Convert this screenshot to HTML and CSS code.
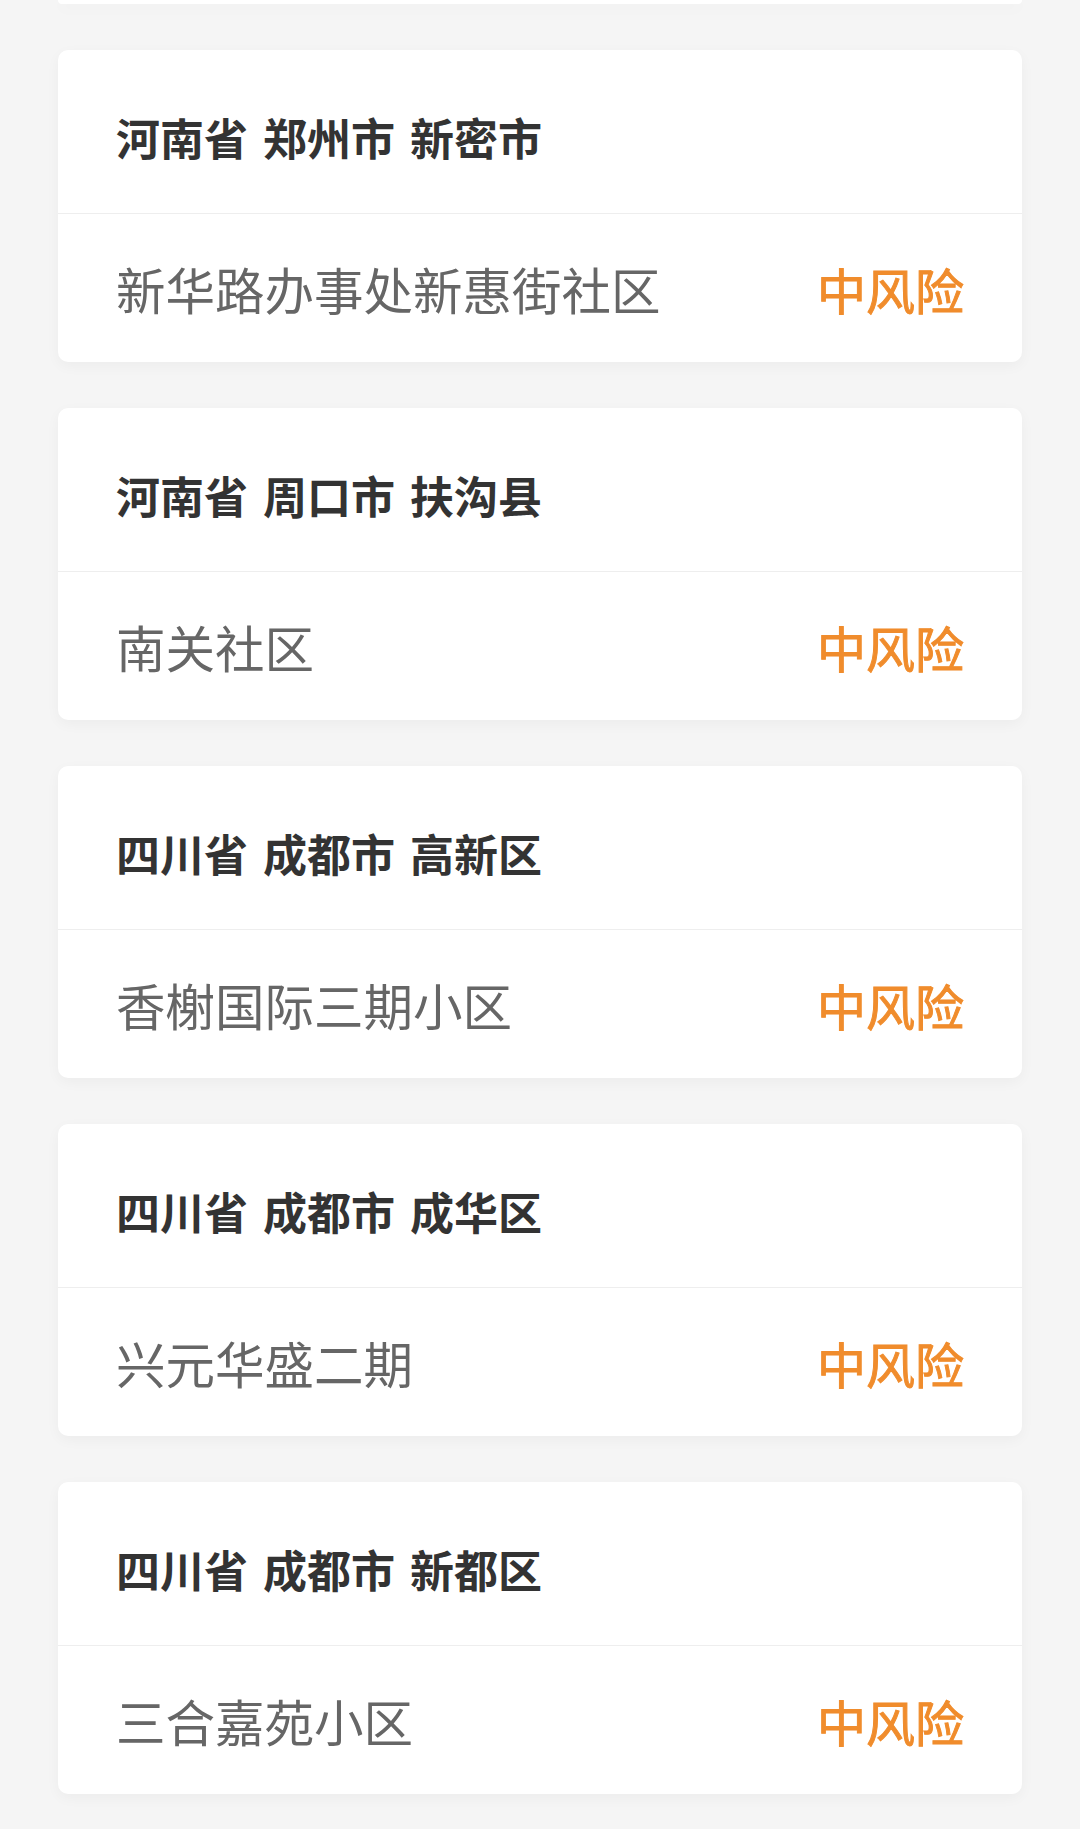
FILE: index.html
```html
<!DOCTYPE html>
<html lang="zh-CN">
<head>
    <meta charset="UTF-8">
    <meta name="viewport" content="width=device-width, initial-scale=1.0">
    <title>中风险地区</title>
    <link rel="stylesheet" href="styles.css">
</head>
<body>
    <div class="list">
        <!-- 上一张卡片只露出底边 -->
        <div class="card card-tail"></div>

        <div class="card">
            <div class="card-head">河南省 郑州市 新密市</div>
            <div class="card-row">
                <span class="place">新华路办事处新惠街社区</span>
                <span class="risk">中风险</span>
            </div>
        </div>

        <div class="card">
            <div class="card-head">河南省 周口市 扶沟县</div>
            <div class="card-row">
                <span class="place">南关社区</span>
                <span class="risk">中风险</span>
            </div>
        </div>

        <div class="card">
            <div class="card-head">四川省 成都市 高新区</div>
            <div class="card-row">
                <span class="place">香榭国际三期小区</span>
                <span class="risk">中风险</span>
            </div>
        </div>

        <div class="card">
            <div class="card-head">四川省 成都市 成华区</div>
            <div class="card-row">
                <span class="place">兴元华盛二期</span>
                <span class="risk">中风险</span>
            </div>
        </div>

        <div class="card">
            <div class="card-head">四川省 成都市 新都区</div>
            <div class="card-row">
                <span class="place">三合嘉苑小区</span>
                <span class="risk">中风险</span>
            </div>
        </div>
    </div>
</body>
</html>
```

FILE: styles.css
```css
body {
    margin: 0;
    background-color: #f5f5f5;
    font-family: "Noto Sans CJK SC", "Noto Sans", sans-serif;
    overflow: hidden;
}
.list {
    padding: 0 58px;
}
.card {
    background: #fff;
    border-radius: 10px;
    margin-bottom: 46px;
    box-shadow: 0 4px 14px rgba(0, 0, 0, 0.04);
    overflow: hidden;
}
.card-tail {
    height: 4px;
    border-radius: 0 0 10px 10px;
}
.card-head {
    box-sizing: border-box;
    height: 164px;
    padding: 10px 58px 0;
    display: flex;
    align-items: center;
    font-size: 44px;
    font-weight: bold;
    color: #333;
    border-bottom: 1px solid #eeeeee;
    white-space: pre;
    word-spacing: 5px;
}
.card-row {
    height: 148px;
    padding: 0 58px;
    display: flex;
    align-items: center;
    justify-content: space-between;
}
.place {
    font-size: 49.5px;
    color: #666;
}
.risk {
    font-size: 49px;
    color: #f08c2c;
    -webkit-text-stroke: 1px #f08c2c;
}
```
